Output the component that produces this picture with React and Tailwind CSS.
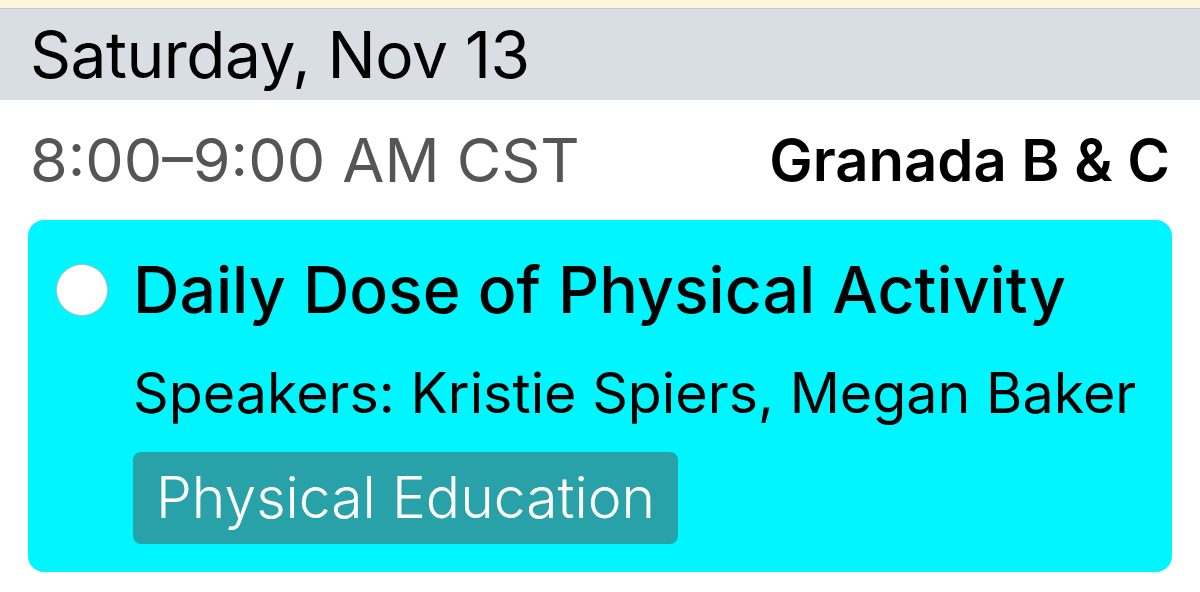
import React from "react";

const session = {
  time: "8:00–9:00 AM CST",
  room: "Granada B & C",
  title: "Daily Dose of Physical Activity",
  speakers: "Speakers: Kristie Spiers, Megan Baker",
  track: "Physical Education",
};

export default function App() {
  return (
    <div className="min-h-screen w-[1200px] h-[592px] overflow-hidden bg-white font-['Inter',_sans-serif] text-black">
      <div className="h-[9px] bg-[#fdf6dc] border-b border-[#c9c9c4]" />
      <div className="h-[91px] bg-[#d9dde4] px-[30px] flex items-center">
        <h1 className="text-[64px] leading-none tracking-[-0.5px] font-normal">
          Saturday, Nov 13
        </h1>
      </div>
      <div className="flex items-center justify-between px-[30px] h-[120px]">
        <span className="text-[61px] leading-none text-[#555555]">
          {session.time}
        </span>
        <span className="text-[58px] leading-none font-semibold">
          {session.room}
        </span>
      </div>
      <div className="mx-[28px] rounded-[16px] bg-[#00f6ff] pt-[30px] pb-[28px] pl-[28px] pr-[20px] flex gap-[25px]">
        <div className="mt-[14px] w-[52px] h-[52px] shrink-0 rounded-full bg-white border border-[#b8b8b8]" />
        <div className="flex flex-col">
          <h2 className="text-[64.3px] leading-[80px] font-medium whitespace-nowrap">
            {session.title}
          </h2>
          <p className="text-[55.6px] leading-[60px] mt-[33px] whitespace-nowrap">
            {session.speakers}
          </p>
          <span className="mt-[29px] self-start rounded-[8px] bg-[#28a1a8] text-white text-[57px] leading-none px-[23px] pt-[17px] pb-[18px] font-light">
            {session.track}
          </span>
        </div>
      </div>
    </div>
  );
}
